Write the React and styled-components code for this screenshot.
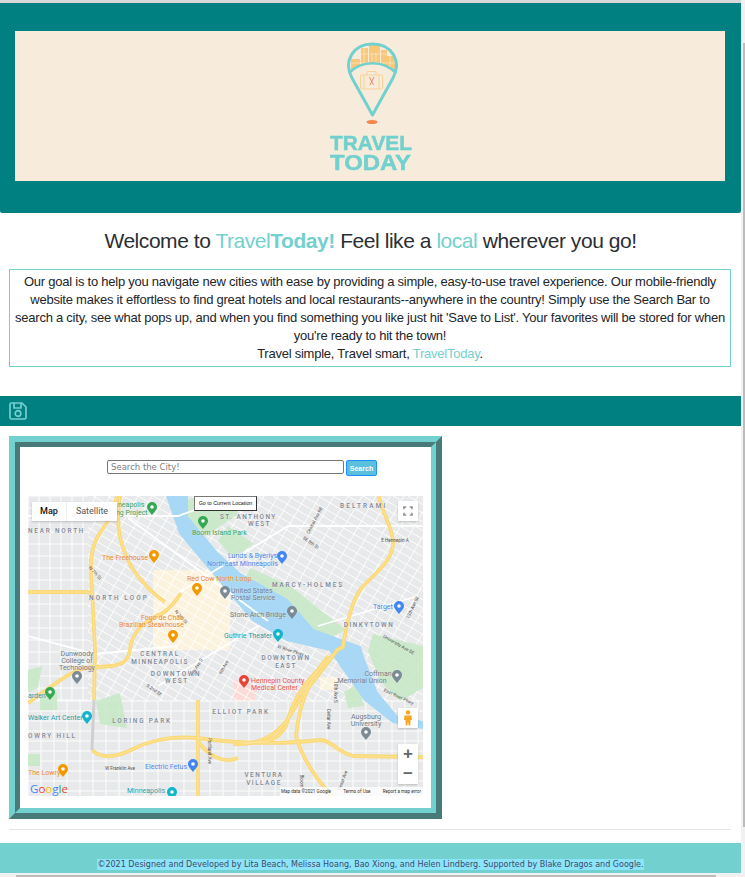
import styled, { createGlobalStyle } from "styled-components"

const teal = "#008080"
const aqua = "#72d0ce"
const slate = "#477a78"

const GlobalStyle = createGlobalStyle`
  html, body {
    margin: 0;
    padding: 0;
    background: white;
    overflow: hidden;
    font-family: "Liberation Sans", Arial, sans-serif;
    color: #212529;
  }
`

const Page = styled.div`
  position: relative;
  width: 745px;
  height: 877px;
  overflow: hidden;
`
const Content = styled.div`
  width: 741px;
  height: 873px;
  display: flex;
  flex-direction: column;
  border-top: 3px solid #d8d8d8;
  box-sizing: border-box;
`
const Header = styled.header`
  height: 210px;
  flex: none;
  background: ${teal};
  padding: 28px 16px 32px 15px;
  box-sizing: border-box;
  border-bottom-right-radius: 2px;
  border-bottom-left-radius: 2px;
`
const Banner = styled.div`
  height: 150px;
  background: #f7ecdc;
  display: flex;
  justify-content: center;
`
const LogoSvg = styled.svg`
  width: 150px;
  height: 150px;
  margin-left: 1px;
  filter: blur(0.4px);
`
const Welcome = styled.h2`
  margin: 16px 0 0;
  height: 24px;
  font-size: 21px;
  letter-spacing: -0.45px;
  line-height: 24px;
  font-weight: 400;
  text-align: center;
  color: #2b2f33;
`
const Aqua = styled.span`
  color: ${aqua};
  font-weight: ${(p) => (p.$bold ? 700 : 400)};
`
const Intro = styled.div`
  margin: 16px 10px 0 9px;
  border: 1px solid ${aqua};
  padding: 3px 1px 3px;
  font-size: 13px;
  letter-spacing: -0.24px;
  line-height: 18px;
  text-align: center;
  color: #212529;
`
const SaveBar = styled.div`
  margin-top: 29px;
  height: 30px;
  flex: none;
  background: ${teal};
  display: flex;
  align-items: center;
  padding-left: 9px;
`
const MapFrame = styled.section`
  margin: 10px 0 0 9px;
  width: 433px;
  height: 383px;
  box-sizing: border-box;
  border: 6px solid;
  border-color: ${aqua} ${slate} ${slate} ${aqua};
  flex: none;
`
const MapFrameInner = styled.div`
  height: 100%;
  box-sizing: border-box;
  border: 5px solid;
  border-color: ${slate} ${aqua} ${aqua} ${slate};
  padding: 13px 8px 0;
  background: white;
`
const SearchRow = styled.div`
  display: flex;
  align-items: flex-start;
  gap: 2px;
  margin-left: 79px;
  height: 36px;
`
const SearchInput = styled.input`
  width: 237px;
  height: 14px;
  box-sizing: border-box;
  border: 1px solid #767676;
  border-radius: 2px;
  padding: 0 3px;
  font-family: "DejaVu Sans", sans-serif;
  font-size: 8.5px;
  outline: none;
  &::placeholder {
    color: #808080;
  }
`
const SearchButton = styled.button`
  width: 31px;
  height: 16px;
  box-sizing: border-box;
  border: 1px solid #1e90ff;
  border-radius: 2px;
  background: #5bc0de;
  color: white;
  font-family: "Liberation Sans", sans-serif;
  font-size: 7px;
  font-weight: 700;
  padding: 0;
`
const MapBox = styled.div`
  position: relative;
  width: 395px;
  height: 300px;
  overflow: hidden;
  background: #e8e8e8;
`
const MapSvg = styled.svg`
  display: block;
  width: 395px;
  height: 300px;
  font-family: Roboto, sans-serif;
`
const MapType = styled.div`
  position: absolute;
  top: 6px;
  left: 4px;
  width: 85px;
  height: 19px;
  display: flex;
  background: white;
  box-shadow: 0 1px 2px rgba(0, 0, 0, 0.2);
  font-family: Roboto, sans-serif;
  font-size: 9px;
  line-height: 19px;
`
const MapTypeTab = styled.div`
  flex: ${(p) => (p.$active ? "0 0 34px" : "1")};
  text-align: center;
  color: ${(p) => (p.$active ? "#111" : "#565656")};
  font-weight: ${(p) => (p.$active ? 500 : 400)};
  border-right: ${(p) => (p.$active ? "1px solid #eee" : "none")};
`
const LocationTip = styled.div`
  position: absolute;
  top: 0;
  left: 166px;
  width: 63px;
  height: 15px;
  box-sizing: border-box;
  background: white;
  border: 1px solid #333;
  border-top-color: #777;
  border-left-color: #777;
  font-family: "Liberation Sans", sans-serif;
  font-size: 5.3px;
  line-height: 13px;
  text-align: center;
  white-space: nowrap;
  color: #111;
`
const MapButton = styled.div`
  position: absolute;
  left: 370px;
  top: ${(p) => p.$top}px;
  width: 20px;
  height: ${(p) => p.$height || 20}px;
  background: white;
  box-shadow: 0 1px 2px rgba(0, 0, 0, 0.2);
  display: flex;
  flex-direction: column;
  align-items: center;
  justify-content: center;
`
const ZoomSign = styled.div`
  height: 20px;
  line-height: 19px;
  font-family: "Liberation Sans", sans-serif;
  font-size: 17px;
  font-weight: 700;
  color: #666;
`
const Attribution = styled.div`
  position: absolute;
  right: 0;
  bottom: 0;
  height: 9px;
  width: 143px;
  background: rgba(255, 255, 255, 0.75);
  display: flex;
  justify-content: space-between;
  padding: 0 2px 0 1px;
  box-sizing: border-box;
  font-family: Roboto, sans-serif;
  font-size: 4.6px;
  line-height: 9px;
  color: #333;
  white-space: nowrap;
`
const Rule = styled.hr`
  margin: 10px 10px 0 9px;
  border: none;
  border-top: 1px solid #e4e4e4;
  flex: none;
`
const Footer = styled.footer`
  margin-top: 13px;
  height: 30px;
  flex: none;
  background: ${aqua};
  display: flex;
  justify-content: center;
  align-items: flex-end;
  padding-bottom: 3px;
  box-sizing: border-box;
`
const Credit = styled.span`
  background: #8be4f8;
  font-family: "DejaVu Sans", sans-serif;
  font-size: 8px;
  line-height: 11px;
  color: #3d4a6b;
  white-space: nowrap;
`
const ScrollTrack = styled.div`
  position: absolute;
  background: #f1f1f1;
  ${(p) =>
    p.$side === "right"
      ? "top: 0; right: 0; width: 4px; height: 877px;"
      : "left: 0; bottom: 0; height: 4px; width: 745px;"}
`
const ScrollThumb = styled.div`
  position: absolute;
  background: #bcbcbc;
  ${(p) =>
    p.$side === "right"
      ? "top: 43px; right: 0; width: 2px; height: 784px;"
      : "left: 16px; bottom: 0; height: 2px; width: 700px;"}
`

const Logo = () => (
  <LogoSvg viewBox="0 0 150 150">
    <clipPath id="dome">
      <path d="M54 41 C52 24 62 13 76.5 13 C91 13 101 24 99 41 C86 30 67 30 54 41 Z" />
    </clipPath>
    <g clipPath="url(#dome)">
      <g fill="#f8c778">
        <rect x="55" y="28" width="9" height="14" />
        <rect x="65" y="17" width="7" height="20" />
        <rect x="73" y="14" width="11" height="22" />
        <rect x="85" y="19" width="6" height="18" />
        <rect x="91" y="25" width="8" height="14" />
      </g>
      <path
        d="M55 32 H99 M65 23 H91 M68 17 V36 M76 22 V36 M80 22 V36 M94 25 V39"
        stroke="#fbe6bf"
        strokeWidth="0.8"
      />
    </g>
    <path
      d="M76.5 84 L56 47 C47 30 57 13 76.5 13 C96 13 106 30 97 47 Z"
      fill="none"
      stroke={aqua}
      strokeWidth="3"
      strokeLinejoin="round"
    />
    <path d="M53 42 C66 29 87 29 100 42" fill="none" stroke={aqua} strokeWidth="2.6" />
    <g fill="none" stroke="#fad295" strokeWidth="1">
      <rect x="64.5" y="44" width="22" height="14" rx="1" />
      <path d="M71 44 V40.5 H80 V44 M68 44 V58 M83 44 V58" />
    </g>
    <path d="M73.5 46 L77.5 54 M78 46 L74 54" stroke="#ef8a68" strokeWidth="1" />
    <ellipse cx="76" cy="91" rx="5.5" ry="2" fill="#f58549" />
    <g fill={aqua} stroke={aqua} strokeWidth="0.5" fontFamily="'Liberation Sans', sans-serif" fontWeight="700">
      <text x="34" y="119" fontSize="20" textLength="82" lengthAdjust="spacingAndGlyphs">TRAVEL</text>
      <text x="34" y="139" fontSize="22" textLength="81" lengthAdjust="spacingAndGlyphs">TODAY</text>
    </g>
  </LogoSvg>
)

const SaveIcon = () => (
  <svg width="18" height="18" viewBox="0 0 18 18" fill="none" stroke={aqua} strokeWidth="1.7" strokeLinejoin="round">
    <path d="M2.5 1 H13 L17 5 V15.5 A1.5 1.5 0 0 1 15.5 17 H2.5 A1.5 1.5 0 0 1 1 15.5 V2.5 A1.5 1.5 0 0 1 2.5 1 Z" />
    <path d="M5 1 V6 H12 V1" />
    <circle cx="9" cy="11.5" r="2.8" />
  </svg>
)

// street lines are generated, the map is just decoration
const range = (from, to, step) => {
  const out = []
  for (let v = from; v <= to; v += step) out.push(v)
  return out
}

const highways = [
  "M0 96 H59 L66 98",
  "M89 0 C85 20 78 28 70 40 C62 54 62 70 64 94 L67 154 L66 204",
  "M92 0 C87 30 92 50 104 72 C115 88 125 98 137 106",
  "M102 154 C103 138 115 125 135 117 C142 112 148 105 153 97",
  "M102 154 C100 166 95 171 66 171 C45 171 25 190 0 207",
  "M64 254 C72 262 85 263 105 253 C125 243 145 240 169 242 C190 245 240 250 292 244 C304 244 308 256 325 260 L395 261",
  "M170 204 V300",
  "M351 0 C353 15 364 30 365 45 C366 66 345 78 332 94 C322 110 318 130 315 151 L309 154 C295 175 275 195 262 220 C252 235 235 250 205 248",
  "M300 160 C285 180 272 200 268 240 C275 265 290 285 304 300",
  "M306 158 C290 175 268 190 258 230 C250 244 240 246 220 247",
  "M170 245 C180 260 195 268 210 262",
]

const parks = [
  "M150 6 L172 0 H204 L210 18 L178 40 L160 22 Z",
  "M222 72 L262 90 L318 134 L296 145 L250 125 L212 92 Z",
  "M68 205 L92 197 L99 232 L72 228 Z",
  "M345 138 L395 150 V192 L372 205 L352 185 L340 155 Z",
  "M0 174 L14 170 L10 192 L0 196 Z",
  "M12 197 H29 V214 H12 Z",
  "M200 30 L226 48 L205 62 L190 45 Z",
  "M0 258 L12 258 L12 270 L0 270 Z",
  "M316 196 L330 188 L336 210 L320 212 Z",
]

// pale commercial blocks and the two hospital campuses
const zones = [
  ["M125 74 L202 74 V154 H125 Z", "#fbf3dd"],
  ["M292 181 H309 V194 H292 Z", "#fbf3dd"],
  ["M205 184 L229 190 L226 210 L205 205 Z", "#fbdcd8"],
  ["M342 226 L372 232 L372 250 L342 246 Z", "#fbdcd8"],
]

const labels = [
  ["NEAR NORTH", 0, 37, "dist", "start", 1.8],
  ["NORTH LOOP", 61, 104, "dist", "start", 2.1],
  ["BELTRAMI", 312, 12, "dist", "start", 2.2],
  ["ST. ANTHONY", 192, 23, "dist", "start", 1.5],
  ["WEST", 220, 30, "dist", "start", 1.5],
  ["MARCY-HOLMES", 280, 91, "dist", "middle", 1.9],
  ["DINKYTOWN", 341, 131, "dist", "middle", 1.5],
  ["CENTRAL", 132, 160, "dist", "middle", 1.7],
  ["MINNEAPOLIS", 132, 168, "dist", "middle", 1.4],
  ["DOWNTOWN", 148, 180, "dist", "middle", 1.7],
  ["WEST", 149, 187, "dist", "middle", 1.7],
  ["DOWNTOWN", 258, 164, "dist", "middle", 1.5],
  ["EAST", 258, 172, "dist", "middle", 1.5],
  ["LORING PARK", 114, 227, "dist", "middle", 1.8],
  ["ELLIOT PARK", 213, 218, "dist", "middle", 1.8],
  ["OWRY HILL", 0, 242, "dist", "start", 1.8],
  ["VENTURA", 236, 281, "dist", "middle", 1.5],
  ["VILLAGE", 236, 289, "dist", "middle", 1.5],
  ["Boom Island Park", 164, 39, "green", "start"],
  ["neapolis", 90, 11, "green", "start"],
  ["ng Project", 88, 19, "green", "start"],
  ["The Freehouse", 74, 64, "orange", "start"],
  ["Red Cow North Loop", 159, 85, "orange", "start"],
  ["Fogo de Chão", 113, 124, "orange", "start"],
  ["Brazilian Steakhouse", 91, 131, "orange", "start"],
  ["The Lowry", 0, 279, "orange", "start"],
  ["Lunds & Byerlys", 200, 62, "blue", "start"],
  ["Northeast Minneapolis", 179, 70, "blue", "start"],
  ["Target", 345, 113, "blue", "start"],
  ["Electric Fetus", 117, 273, "blue", "start"],
  ["United States", 203, 97, "gray", "start"],
  ["Postal Service", 203, 104, "gray", "start"],
  ["Stone Arch Bridge", 202, 121, "gray", "start"],
  ["Dunwoody", 49, 160, "gray", "middle"],
  ["College of", 49, 167, "gray", "middle"],
  ["Technology", 49, 174, "gray", "middle"],
  ["Coffman", 350, 180, "gray", "middle"],
  ["Memorial Union", 334, 187, "gray", "middle"],
  ["Augsburg", 338, 223, "gray", "middle"],
  ["University", 338, 230, "gray", "middle"],
  ["Guthrie Theater", 196, 142, "teal", "start"],
  ["Walker Art Center", 0, 224, "teal", "start"],
  ["arden", 0, 202, "teal", "start"],
  ["Minneapolis", 99, 297, "teal", "start"],
  ["Hennepin County", 223, 187, "red", "start"],
  ["Medical Center", 223, 194, "red", "start"],
]

const labelColors = {
  dist: "#7c8798",
  green: "#34a058",
  orange: "#e8862c",
  blue: "#4a86e8",
  gray: "#6f7780",
  teal: "#1a9ba5",
  red: "#e5534b",
}

const pins = [
  [124, 12, "#34a853"],
  [175, 26, "#34a853"],
  [126, 60, "#f29900"],
  [169, 93, "#f29900"],
  [145, 140, "#f29900"],
  [197, 96, "#7b8a95"],
  [254, 61, "#4285f4"],
  [371, 111, "#4285f4"],
  [49, 181, "#7b8a95"],
  [22, 197, "#34a853"],
  [59, 221, "#12b5cb"],
  [35, 274, "#f29900"],
  [165, 269, "#4285f4"],
  [144, 297, "#12b5cb"],
  [264, 116, "#7b8a95"],
  [250, 139, "#12b5cb"],
  [369, 180, "#7b8a95"],
  [338, 237, "#7b8a95"],
  [216, 185, "#ea4335"],
]

const roadNames = [
  ["N 7th St", 66, 78, 48],
  ["N 3rd St", 152, 122, 48],
  ["S 2nd St", 125, 195, 35],
  ["Central Ave NE", 288, 25, -62],
  ["SE 8th St", 282, 48, 35],
  ["E Hennepin A", 367, 46, 0],
  ["13th Ave SE", 386, 112, -65],
  ["University Ave SE", 370, 150, 30],
  ["W River Pkwy", 262, 156, 18],
  ["East River Pkwy", 370, 202, 25],
  ["10th Ave S", 306, 196, 90],
  ["Cedar Ave", 299, 223, 90],
  ["Bloom", 272, 285, 90],
  ["Cedar Ave", 316, 285, -70],
  ["Portland Ave", 180, 255, 90],
  ["W Franklin Ave", 92, 274, 0],
  ["5th Ave S", 170, 172, -60],
  ["6th Ave", 197, 172, -60],
]

const Streets = () => (
  <g stroke="#fff" strokeWidth="0.9">
    {range(-400, 900, 15).map((v) => (
      <line key={"a" + v} x1={v} y1="0" x2={v + 520} y2="300" />
    ))}
    {range(-100, 900, 14).map((v) => (
      <line key={"b" + v} x1={v} y1="0" x2={v - 173} y2="300" />
    ))}
  </g>
)

const SideGrid = () => (
  <g>
    <rect x="0" y="205" width="395" height="95" fill="#e8e9ea" />
    <rect x="0" y="0" width="60" height="205" fill="#e8e9ea" />
    <g stroke="#fff" strokeWidth="0.9">
      {range(0, 205, 12).map((y) => (
        <line key={"h" + y} x1="0" y1={y} x2="60" y2={y} />
      ))}
      {range(0, 60, 11).map((x) => (
        <line key={"v" + x} x1={x} y1="0" x2={x} y2="205" />
      ))}
      {range(205, 300, 10).map((y) => (
        <line key={"l" + y} x1="0" y1={y} x2="395" y2={y} />
      ))}
      {range(0, 395, 13).map((x) => (
        <line key={"m" + x} x1={x} y1="205" x2={x} y2="300" />
      ))}
    </g>
  </g>
)

const CityMap = () => (
  <MapSvg viewBox="0 0 395 300">
    <rect width="395" height="300" fill="#e8e9ea" />
    {zones.map(([d, fill]) => (
      <path key={d} d={d} fill={fill} />
    ))}
    <Streets />
    <SideGrid />
    {parks.map((d) => (
      <path key={d} d={d} fill="#c6e8c4" opacity="0.85" />
    ))}
    <path
      d="M139 0 H159 V21 L189 57 L212 78 L259 104 L285 134 L332 151 L335 161 L349 197 L369 221 L395 226 V232 L365 226 L337 204 L302 154 L259 144 L225 124 L192 85 L152 37 Z"
      fill="#a8d8f5"
      stroke="#a8d8f5"
      strokeWidth="2"
      strokeLinejoin="round"
    />
    <g stroke="#fff" strokeWidth="1.8" fill="none">
      <path d="M0 20 H150 L205 0" />
      <path d="M100 22 L240 125" />
      <path d="M0 140 L67 158 L150 150" />
      <path d="M150 97 L260 30 H395" />
      <path d="M290 130 L390 100" />
      <path d="M130 190 L230 130" />
    </g>
    {highways.map((d) => (
      <path key={d} d={d} fill="none" stroke="#fbd977" strokeWidth="3.8" strokeLinejoin="round" />
    ))}
    {highways.map((d) => (
      <path key={d + "lane"} d={d} fill="none" stroke="#fde8a6" strokeWidth="0.7" />
    ))}
    <path d="M66 204 L64 254" stroke="#cfcfcf" strokeWidth="3" fill="none" />
    {roadNames.map(([name, x, y, rot]) => (
      <text key={name + x} x={x} y={y} fontSize="4.6" fill="#555" textAnchor="middle" transform={`rotate(${rot} ${x} ${y})`}>
        {name}
      </text>
    ))}
    {labels.map(([name, x, y, kind, anchor, spacing]) => (
      <text
        key={name + x + y}
        x={x}
        y={y}
        fontSize={kind === "dist" ? 6.4 : 7}
        fontWeight={kind === "dist" ? 500 : 400}
        letterSpacing={spacing || 0}
        fill={labelColors[kind]}
        textAnchor={anchor}
        stroke="rgba(255,255,255,0.55)"
        strokeWidth="0.4"
        paintOrder="stroke"
      >
        {name}
      </text>
    ))}
    {pins.map(([x, y, color]) => (
      <g key={x + "-" + y}>
        <path d={`M${x} ${y + 7} C${x - 2} ${y + 4} ${x - 5} ${y + 2} ${x - 5} ${y - 1} A5 5 0 1 1 ${x + 5} ${y - 1} C${x + 5} ${y + 2} ${x + 2} ${y + 4} ${x} ${y + 7} Z`} fill={color} />
        <circle cx={x} cy={y - 1} r="1.8" fill="#fff" />
      </g>
    ))}
    <g fontSize="11.5" fontWeight="500" fontFamily="'Open Sans', sans-serif">
      <text x="2" y="297">
        <tspan fill="#4285f4">G</tspan>
        <tspan fill="#ea4335">o</tspan>
        <tspan fill="#fbbc05">o</tspan>
        <tspan fill="#4285f4">g</tspan>
        <tspan fill="#34a853">l</tspan>
        <tspan fill="#ea4335">e</tspan>
      </text>
    </g>
  </MapSvg>
)

const Pegman = () => (
  <svg width="10" height="16" viewBox="0 0 10 16">
    <circle cx="5" cy="2.4" r="2.2" fill="#f5a623" />
    <path d="M1.5 5.5 H8.5 L9 10 H7.6 L7.2 15.5 H5.6 L5 11 L4.4 15.5 H2.8 L2.4 10 H1 Z" fill="#f5a623" />
  </svg>
)

const FullscreenIcon = () => (
  <svg width="10" height="10" viewBox="0 0 10 10" fill="none" stroke="#8a8a8a" strokeWidth="1.4">
    <path d="M1 3.2 V1 H3.2 M6.8 1 H9 V3.2 M9 6.8 V9 H6.8 M3.2 9 H1 V6.8" />
  </svg>
)

const App = () => {
  return (
    <Page>
      <GlobalStyle />
      <Content>
        <Header>
          <Banner>
            <Logo />
          </Banner>
        </Header>
        <Welcome>
          Welcome to <Aqua>Travel</Aqua>
          <Aqua $bold>Today!</Aqua> Feel like a <Aqua>local</Aqua> wherever you go!
        </Welcome>
        <Intro>
          Our goal is to help you navigate new cities with ease by providing a simple, easy-to-use travel
          experience. Our mobile-friendly website makes it effortless to find great hotels and local
          restaurants--anywhere in the country! Simply use the Search Bar to search a city, see what pops up,
          and when you find something you like just hit 'Save to List'. Your favorites will be stored for when
          you're ready to hit the town!
          <br />
          Travel simple, Travel smart, <Aqua>TravelToday</Aqua>.
        </Intro>
        <SaveBar>
          <SaveIcon />
        </SaveBar>
        <MapFrame>
          <MapFrameInner>
            <SearchRow>
              <SearchInput placeholder="Search the City!" />
              <SearchButton>Search</SearchButton>
            </SearchRow>
            <MapBox>
              <CityMap />
              <MapType>
                <MapTypeTab $active>Map</MapTypeTab>
                <MapTypeTab>Satellite</MapTypeTab>
              </MapType>
              <LocationTip>Go to Current Location</LocationTip>
              <MapButton $top={5}>
                <FullscreenIcon />
              </MapButton>
              <MapButton $top={212}>
                <Pegman />
              </MapButton>
              <MapButton $top={248} $height={40}>
                <ZoomSign>+</ZoomSign>
                <ZoomSign>−</ZoomSign>
              </MapButton>
              <Attribution>
                <span>Map data ©2021 Google</span>
                <span>Terms of Use</span>
                <span>Report a map error</span>
              </Attribution>
            </MapBox>
          </MapFrameInner>
        </MapFrame>
        <Rule />
        <Footer>
          <Credit>
            ©2021 Designed and Developed by Lita Beach, Melissa Hoang, Bao Xiong, and Helen Lindberg. Supported by
            Blake Dragos and Google.
          </Credit>
        </Footer>
      </Content>
      <ScrollTrack $side="right" />
      <ScrollThumb $side="right" />
      <ScrollTrack $side="bottom" />
      <ScrollThumb $side="bottom" />
    </Page>
  )
}

export default App
